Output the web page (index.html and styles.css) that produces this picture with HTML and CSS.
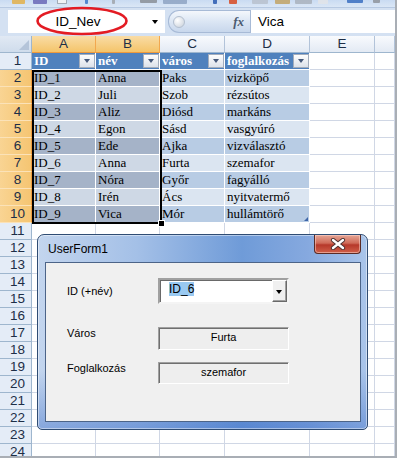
FILE: index.html
```
<!DOCTYPE html>
<html lang="hu">
<head>
    <meta charset="UTF-8">
    <meta name="viewport" content="width=device-width, initial-scale=1.0">
    <title>UserForm1 - Excel</title>
    <link rel="stylesheet" href="styles.css">
</head>
<body>
    <div class="app">
        <div class="qat">
            <span class="ico i1"></span><span class="ico i2"></span><span class="ico i3"></span><span class="ico i4"></span><span class="ico i5"></span><span class="ico i6"></span><span class="ico i7"></span><span class="ico i8"></span><span class="ico i9"></span><span class="ico i10"></span><span class="ico i11"></span><span class="ico i12"></span><span class="ico i13"></span><span class="ico i14"></span><span class="ico i15"></span>
        </div>
        <div class="fbar">
            <div class="namebox"><span class="nb-text">ID_Nev</span><span class="nb-arrow"></span></div>
            <div class="fx-pill"><span class="knob"></span><span class="fx">fx</span></div>
            <div class="formula">Vica</div>
        </div>
        <svg class="mark" width="94" height="30" viewBox="0 0 94 30">
            <ellipse cx="47" cy="15" rx="44.5" ry="13" fill="none" stroke="#e31b23" stroke-width="2.6"/>
        </svg>

        <div class="sheet-wrap">
            <div class="sheet">
                <div class="corner"></div><div class="ch on">A</div><div class="ch on">B</div><div class="ch">C</div><div class="ch">D</div><div class="ch">E</div><div class="ch"></div>

                <div class="rh">1</div><div class="th">ID<i class="dd"></i></div><div class="th">név<i class="dd"></i></div><div class="th">város<i class="dd"></i></div><div class="th">foglalkozás<i class="dd"></i></div><div></div><div></div>
                <div class="rh on">2</div><div class="tc sel d">ID_1</div><div class="tc sel d">Anna</div><div class="tc d">Paks</div><div class="tc d">vizköpő</div><div></div><div></div>
                <div class="rh on">3</div><div class="tc sel l">ID_2</div><div class="tc sel l">Juli</div><div class="tc l">Szob</div><div class="tc l">rézsútos</div><div></div><div></div>
                <div class="rh on">4</div><div class="tc sel d">ID_3</div><div class="tc sel d">Aliz</div><div class="tc d">Diósd</div><div class="tc d">markáns</div><div></div><div></div>
                <div class="rh on">5</div><div class="tc sel l">ID_4</div><div class="tc sel l">Egon</div><div class="tc l">Sásd</div><div class="tc l">vasgyúró</div><div></div><div></div>
                <div class="rh on">6</div><div class="tc sel d">ID_5</div><div class="tc sel d">Ede</div><div class="tc d">Ajka</div><div class="tc d">vizválasztó</div><div></div><div></div>
                <div class="rh on">7</div><div class="tc sel l">ID_6</div><div class="tc sel l">Anna</div><div class="tc l">Furta</div><div class="tc l">szemafor</div><div></div><div></div>
                <div class="rh on">8</div><div class="tc sel d">ID_7</div><div class="tc sel d">Nóra</div><div class="tc d">Győr</div><div class="tc d">fagyálló</div><div></div><div></div>
                <div class="rh on">9</div><div class="tc sel l">ID_8</div><div class="tc sel l">Irén</div><div class="tc l">Ács</div><div class="tc l">nyitvatermő</div><div></div><div></div>
                <div class="rh on">10</div><div class="tc sel d">ID_9</div><div class="tc sel d">Vica</div><div class="tc d">Mór</div><div class="tc d last">hullámtörő</div><div></div><div></div>

                <div class="rh">11</div><div></div><div></div><div></div><div></div><div></div><div></div>
                <div class="rh">12</div><div></div><div></div><div></div><div></div><div></div><div></div>
                <div class="rh">13</div><div></div><div></div><div></div><div></div><div></div><div></div>
                <div class="rh">14</div><div></div><div></div><div></div><div></div><div></div><div></div>
                <div class="rh">15</div><div></div><div></div><div></div><div></div><div></div><div></div>
                <div class="rh">16</div><div></div><div></div><div></div><div></div><div></div><div></div>
                <div class="rh">17</div><div></div><div></div><div></div><div></div><div></div><div></div>
                <div class="rh">18</div><div></div><div></div><div></div><div></div><div></div><div></div>
                <div class="rh">19</div><div></div><div></div><div></div><div></div><div></div><div></div>
                <div class="rh">20</div><div></div><div></div><div></div><div></div><div></div><div></div>
                <div class="rh">21</div><div></div><div></div><div></div><div></div><div></div><div></div>
                <div class="rh">22</div><div></div><div></div><div></div><div></div><div></div><div></div>
                <div class="rh">23</div><div></div><div></div><div></div><div></div><div></div><div></div>
                <div class="rh">24</div><div></div><div></div><div></div><div></div><div></div><div></div>
            </div>
            <div class="selection"><span class="handle"></span></div>
        </div>

        <div class="userform">
            <div class="uf-title">
                <span class="uf-caption">UserForm1</span>
                <span class="uf-close">
                    <svg width="16" height="12" viewBox="0 0 16 12">
                        <path d="M3 2 L13 10 M13 2 L3 10" stroke="#4a3030" stroke-width="4.2" stroke-linecap="round"/>
                        <path d="M3 2 L13 10 M13 2 L3 10" stroke="#ffffff" stroke-width="2.4" stroke-linecap="round"/>
                    </svg>
                </span>
            </div>
            <div class="uf-client">
                <div class="uf-row r1">
                    <span class="uf-label">ID (+név)</span>
                    <div class="combo"><span class="combo-text"><span class="hl">ID_6</span></span><span class="combo-btn"></span></div>
                </div>
                <div class="uf-row r2">
                    <span class="uf-label">Város</span>
                    <div class="tbox tall">Furta</div>
                </div>
                <div class="uf-row r3">
                    <span class="uf-label">Foglalkozás</span>
                    <div class="tbox">szemafor</div>
                </div>
            </div>
        </div>
    </div>
</body>
</html>
```

FILE: styles.css
```
body {
    margin: 0;
    padding: 0;
    background-color: #fff;
    font-family: "Liberation Sans", Arial, sans-serif;
}
.app {
    position: relative;
    width: 395px;
    height: 456px;
    border-right: 2px solid #a9aeb5;
    border-bottom: 2px solid #a9aeb5;
    overflow: hidden;
    background-color: #fff;
}

/* quick access toolbar, cut off at the top */
.qat {
    display: flex;
    align-items: flex-start;
    height: 8px;
    background: linear-gradient(#c9dbf2, #dbe7f6);
    border-bottom: 1px solid #b7c9e2;
    box-sizing: border-box;
}
.ico {
    display: block;
    height: 4px;
    border-radius: 0 0 1px 1px;
    opacity: 0.85;
}
.i1 { margin-left: 12px; width: 13px; background: #e3b04a; }
.i2 { margin-left: 8px; width: 14px; background: #6a67b6; }
.i3 { margin-left: 10px; width: 10px; background: #f6f6f6; border: 1px solid #9aa3ad; border-top: none; box-sizing: border-box; }
.i4 { margin-left: 18px; width: 3px; background: #3c78c8; }
.i5 { margin-left: 24px; width: 3px; background: #a0a4aa; }
.i6 { margin-left: 25px; width: 17px; background: #8a8f96; height: 3px; }
.i7 { margin-left: 6px; width: 24px; background: #8ea3c2; }
.i8 { margin-left: 26px; width: 4px; background: #2a5bb0; }
.i9 { margin-left: 12px; width: 8px; background: #d84a22; }
.i10 { margin-left: 15px; width: 16px; background: #b9c1cc; }
.i11 { margin-left: 7px; width: 15px; background: #c2a364; }
.i12 { margin-left: 5px; width: 17px; background: #a9b1bc; }
.i13 { margin-left: 6px; width: 10px; background: #e2e4e8; }
.i14 { margin-left: 19px; width: 16px; background: #3a6fc0; height: 3px; }
.i15 { margin-left: 10px; width: 7px; background: #8f949b; height: 3px; }

/* formula bar */
.fbar {
    display: flex;
    height: 28px;
    padding: 2px 0 3px 8px;
    box-sizing: border-box;
    background-color: #d4e1f2;
}
.namebox {
    display: flex;
    align-items: center;
    width: 157px;
    background-color: #fff;
}
.nb-text {
    flex: 1;
    text-align: center;
    font-size: 13.5px;
    color: #000;
}
.nb-arrow {
    width: 0;
    height: 0;
    margin: 0 7px 0 4px;
    border-left: 3.5px solid transparent;
    border-right: 3.5px solid transparent;
    border-top: 4px solid #000;
}
.fx-pill {
    display: flex;
    align-items: center;
    justify-content: space-between;
    width: 82px;
    margin-left: 3px;
    padding: 0 6px 0 4px;
    box-sizing: border-box;
    border: 1px solid #a7bad6;
    border-right: none;
    border-radius: 11px 0 0 11px;
    background: linear-gradient(#f4f7fc, #dbe6f4 50%, #c8d7ec);
}
.knob {
    width: 10px;
    height: 10px;
    border-radius: 50%;
    border: 1px solid #b3bfcf;
    background: radial-gradient(circle at 35% 35%, #ffffff, #c6ced9);
}
.fx {
    font: italic bold 13px "Liberation Serif", serif;
    color: #4b5a70;
}
.formula {
    flex: 1;
    padding-left: 7px;
    background-color: #fff;
    border-left: 1px solid #a7bad6;
    font-size: 13.5px;
    line-height: 23px;
    color: #000;
}
.mark {
    position: absolute;
    left: 35px;
    top: 6px;
}

/* worksheet */
.sheet-wrap {
    position: relative;
}
.sheet {
    display: grid;
    grid-template-columns: 32px 64px 64px 65px 85px 65px 20px;
    grid-auto-rows: 17px;
}
.sheet > div {
    box-sizing: border-box;
    border-right: 1px solid #d0d7e5;
    border-bottom: 1px solid #d0d7e5;
    overflow: hidden;
    white-space: nowrap;
}
.sheet > .corner {
    background: linear-gradient(#e1e9f4, #cfdcec);
    border-right-color: #9eb6ce;
    border-bottom-color: #9eb6ce;
    position: relative;
}
.corner::after {
    content: "";
    position: absolute;
    right: 2px;
    bottom: 2px;
    width: 10px;
    height: 10px;
    background-color: #b4c4d9;
    clip-path: polygon(100% 0, 100% 100%, 0 100%);
}
.sheet > .ch {
    text-align: center;
    font-size: 13.5px;
    line-height: 16px;
    color: #1d2e47;
    background: linear-gradient(#f8fafd, #e3eaf4);
    border-right-color: #b2c3d9;
    border-bottom-color: #9eb6ce;
}
.sheet > .ch.on {
    background: linear-gradient(#f9dca6, #f4c46a);
    border-right-color: #f2a84e;
    border-bottom-color: #ee9a3c;
}
.sheet > .rh {
    padding-left: 4px;
    text-align: center;
    font-size: 13.5px;
    line-height: 16px;
    color: #1d2e47;
    background-color: #e4ecf7;
    border-right-color: #9eb6ce;
    border-bottom-color: #9eb6ce;
}
.sheet > .rh.on {
    background: linear-gradient(90deg, #f9d493, #f5c572);
    border-right-color: #ee9a3c;
    border-bottom-color: #fbe2b8;
}

/* table cells */
.sheet > .th,
.sheet > .tc {
    padding-left: 2px;
    font: 13px "Liberation Serif", serif;
    line-height: 16px;
    color: #000;
    border-right-color: #fff;
    border-bottom-color: #fff;
}
.sheet > .th {
    display: flex;
    align-items: center;
    background-color: #4f81bd;
    color: #fff;
    font-weight: bold;
}
.dd {
    display: block;
    flex: none;
    position: relative;
    width: 16px;
    height: 14px;
    margin-left: auto;
    box-sizing: border-box;
    border: 1px solid #a3adbc;
    background: linear-gradient(#fdfdfd, #dde2ea);
}
.dd::after {
    content: "";
    position: absolute;
    left: 4px;
    top: 4px;
    border-left: 3.5px solid transparent;
    border-right: 3.5px solid transparent;
    border-top: 4px solid #46597a;
}
.sheet > .tc.d { background-color: #b8cce4; }
.sheet > .tc.l { background-color: #dbe5f1; }
.sheet > .tc.sel.d { background-color: #a5b3c8; }
.sheet > .tc.sel.l { background-color: #ced8e5; }
.sheet > .tc.last { position: relative; }
.tc.last::after {
    content: "";
    position: absolute;
    right: 1px;
    bottom: 1px;
    width: 4px;
    height: 4px;
    background-color: #3f66a8;
    clip-path: polygon(100% 0, 100% 100%, 0 100%);
}
.selection {
    position: absolute;
    left: 32px;
    top: 34px;
    width: 130px;
    height: 154px;
    box-sizing: border-box;
    border: 2px solid #000;
    pointer-events: none;
}
.handle {
    position: absolute;
    right: -5px;
    bottom: -5px;
    width: 5px;
    height: 5px;
    background-color: #000;
    border: 1px solid #fff;
}

/* UserForm window */
.userform {
    position: absolute;
    left: 37px;
    top: 234px;
    width: 331px;
    height: 196px;
    box-sizing: border-box;
    display: flex;
    flex-direction: column;
    padding: 0 6px 7px 7px;
    border: 1px solid #2f4c73;
    border-radius: 7px 7px 5px 5px;
    background:
        linear-gradient(rgba(255, 255, 255, 0) 70%, rgba(60, 110, 200, 0.45)),
        linear-gradient(90deg, #c3d5ee 0%, #a4c0e7 30%, #6f9bd8 62%, #86a9df 82%, #aac5ea 100%);
    box-shadow: inset 0 0 0 1px rgba(255, 255, 255, 0.45);
}
.uf-title {
    display: flex;
    align-items: center;
    height: 27px;
    flex: none;
}
.uf-caption {
    padding-left: 3px;
    font-size: 12px;
    color: #000;
}
.uf-close {
    display: flex;
    align-items: center;
    justify-content: center;
    align-self: flex-start;
    width: 47px;
    height: 19px;
    margin-left: auto;
    box-sizing: border-box;
    border: 1px solid #5b2b25;
    border-top: none;
    border-radius: 0 0 4px 4px;
    background: linear-gradient(#e6a696, #cf6a58 45%, #b6382a 55%, #d0604a);
    box-shadow: inset 0 0 0 1px rgba(255, 220, 210, 0.5);
}
.uf-client {
    flex: 1;
    padding: 15px 0 0 21px;
    background-color: #f0f0f0;
    border: 1px solid #4c6488;
    font-size: 11px;
    color: #000;
}
.uf-row {
    display: flex;
    align-items: flex-start;
}
.r2 { margin-top: 23px; }
.r3 { margin-top: 12px; }
.uf-label {
    width: 91px;
    line-height: 13px;
}
.r1 .uf-label {
    line-height: 26px;
}
.combo {
    display: flex;
    width: 131px;
    height: 26px;
    box-sizing: border-box;
    border: 2px solid;
    border-color: #a0a0a0 #f4f4f4 #f4f4f4 #a0a0a0;
    box-shadow: inset 1px 1px 0 #696969;
    background-color: #fff;
}
.combo-text {
    flex: 1;
    padding: 3px 0 0 9px;
    font-size: 12px;
    line-height: 13px;
}
.hl {
    background-color: #99c9f1;
}
.combo-btn {
    position: relative;
    width: 15px;
    box-sizing: border-box;
    border: 1px solid;
    border-color: #ffffff #696969 #696969 #ffffff;
    box-shadow: inset -1px -1px 0 #a0a0a0;
    background-color: #f0f0f0;
}
.combo-btn::after {
    content: "";
    position: absolute;
    left: 3px;
    top: 9px;
    border-left: 3.5px solid transparent;
    border-right: 3.5px solid transparent;
    border-top: 4px solid #000;
}
.tbox {
    width: 131px;
    height: 22px;
    box-sizing: border-box;
    border: 1px solid;
    border-color: #a0a0a0 #ffffff #ffffff #a0a0a0;
    box-shadow: inset 1px 1px 0 #6f6f6f;
    background-color: #eeeeee;
    text-align: center;
    font-size: 11px;
    line-height: 18px;
}
.tbox.tall {
    height: 23px;
}
```
